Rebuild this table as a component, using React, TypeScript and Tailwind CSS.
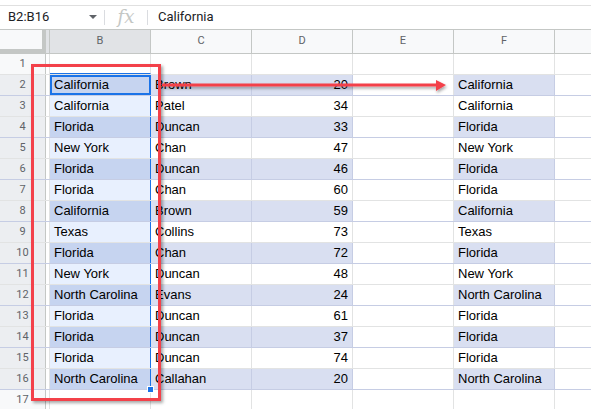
import React from 'react';

type Row = { n: number; b: string; c: string; d: number; f: string };

const rows: Row[] = [
  { n: 2, b: 'California', c: 'Brown', d: 20, f: 'California' },
  { n: 3, b: 'California', c: 'Patel', d: 34, f: 'California' },
  { n: 4, b: 'Florida', c: 'Duncan', d: 33, f: 'Florida' },
  { n: 5, b: 'New York', c: 'Chan', d: 47, f: 'New York' },
  { n: 6, b: 'Florida', c: 'Duncan', d: 46, f: 'Florida' },
  { n: 7, b: 'Florida', c: 'Chan', d: 60, f: 'Florida' },
  { n: 8, b: 'California', c: 'Brown', d: 59, f: 'California' },
  { n: 9, b: 'Texas', c: 'Collins', d: 73, f: 'Texas' },
  { n: 10, b: 'Florida', c: 'Chan', d: 72, f: 'Florida' },
  { n: 11, b: 'New York', c: 'Duncan', d: 48, f: 'New York' },
  { n: 12, b: 'North Carolina', c: 'Evans', d: 24, f: 'North Carolina' },
  { n: 13, b: 'Florida', c: 'Duncan', d: 61, f: 'Florida' },
  { n: 14, b: 'Florida', c: 'Duncan', d: 37, f: 'Florida' },
  { n: 15, b: 'Florida', c: 'Duncan', d: 74, f: 'Florida' },
  { n: 16, b: 'North Carolina', c: 'Callahan', d: 20, f: 'North Carolina' },
];

const cell = 'h-full shrink-0 border-r flex items-center overflow-hidden whitespace-nowrap';

const FormulaBar = () => (
  <div className="h-[25px] pb-px border-t border-t-[#e0e0e0] border-b border-b-[#c4c7c5] mt-[5px] flex items-center font-['Roboto',sans-serif] text-[13px] text-[#202124]">
    <div className="w-[104px] flex items-center justify-between pl-2 pr-[7px]">
      <span>B2:B16</span>
      <svg width="8" height="4" viewBox="0 0 8 4">
        <path d="M0 0h8L4 4z" fill="#5f6368" />
      </svg>
    </div>
    <div className="w-px h-[15px] bg-[#dadce0]" />
    <div className="w-[42px] flex justify-center font-['DejaVu_Serif',serif] italic text-[18px] text-[#c4c7c5] leading-none">
      fx
    </div>
    <div className="w-px h-[15px] bg-[#dadce0]" />
    <span className="pl-[10px]">California</span>
  </div>
);

const Header = () => (
  <div className="h-[24px] flex border-b border-[#c4c7c5] font-['Roboto',sans-serif] text-[11px] text-[#5f6368] bg-[#f8f9fa]">
    <div className="w-[46px] h-full shrink-0 border-r-4 border-b-4 border-[#c4c7c5] -mb-px box-border" />
    <div className="w-[4px] h-full shrink-0 bg-[#e1e3e6] border-r border-[#c4c7c5]" />
    <div className={`${cell} w-[101px] justify-center bg-[#e1e3e6] border-[#c4c7c5]`}>B</div>
    {['C', 'D', 'E', 'F'].map((l) => (
      <div key={l} className={`${cell} w-[101px] justify-center border-[#c4c7c5]`}>
        {l}
      </div>
    ))}
    <div className="flex-1" />
  </div>
);

const RowNum = ({ n, sel }: { n: number; sel?: boolean }) => (
  <div
    className={`w-[46px] h-full shrink-0 border-r border-[#c4c7c5] flex items-center justify-center font-['Roboto',sans-serif] text-[11px] text-[#5f6368] ${sel ? 'bg-[#eceef1]' : 'bg-[#f8f9fa]'}`}
  >
    {n}
  </div>
);

const DataRow = ({ r, last }: { r: Row; last: boolean }) => {
  const band = r.n % 2 === 0;
  const bg = band ? 'bg-[#d9dff1]' : 'bg-white';
  const line = band ? 'border-[#c6cde4]' : 'border-[#e2e3e3]';
  return (
    <div className={`h-[21px] flex border-b ${line} text-[13px] text-black font-['Liberation_Sans',Arial,sans-serif]`}>
      <RowNum n={r.n} sel />
      <div className="w-[4px] h-full shrink-0 border-r border-[#e2e3e3] bg-white" />
      <div
        className={`relative w-[101px] h-full shrink-0 flex items-center pl-[4px] whitespace-nowrap border-r border-[#1a73e8] ${band ? 'bg-[#c6d4f0]' : 'bg-[#e8f0fe]'} ${r.n === 2 ? 'outline-2 outline-[#1a73e8] -outline-offset-2' : ''}`}
      >
        {r.b}
        {last && (
          <div className="absolute -right-[4px] -bottom-[4px] w-[7px] h-[7px] bg-[#1a73e8] border border-white z-10" />
        )}
      </div>
      <div className={`${cell} w-[101px] pl-[4px] ${bg} ${line}`}>{r.c}</div>
      <div className={`${cell} w-[101px] justify-end pr-[4px] ${bg} ${line}`}>{r.d}</div>
      <div className={`${cell} w-[101px] bg-white border-[#e2e3e3]`} />
      <div className={`${cell} w-[101px] pl-[4px] ${bg} ${band ? 'border-[#c6cde4]' : 'border-[#e2e3e3]'}`}>{r.f}</div>
      <div className="flex-1 bg-white" />
    </div>
  );
};

const EmptyRow = ({ n }: { n: number }) => (
  <div className="h-[21px] flex border-b border-[#e2e3e3]">
    <RowNum n={n} />
    <div className="w-[4px] h-full shrink-0 border-r border-[#e2e3e3]" />
    {[0, 1, 2, 3, 4].map((i) => (
      <div key={i} className={`${cell} w-[101px] border-[#e2e3e3] ${n === 1 && i === 0 ? 'border-b border-b-[#1a73e8] -mb-px' : ''}`} />
    ))}
    <div className="flex-1" />
  </div>
);

export default function App() {
  return (
    <div className="relative w-[591px] h-[409px] overflow-hidden bg-white">
      <FormulaBar />
      <Header />
      <EmptyRow n={1} />
      {rows.map((r, i) => (
        <DataRow key={r.n} r={r} last={i === rows.length - 1} />
      ))}
      <EmptyRow n={17} />

      {/* red callout box round B2:B16 */}
      <div className="absolute left-[31px] top-[64px] w-[130px] h-[337px] border-[3px] border-[#f3414a] shadow-[2px_2px_3px_rgba(0,0,0,0.35)] pointer-events-none" />

      {/* arrow to column F */}
      <svg className="absolute left-0 top-0 pointer-events-none" width="591" height="409" viewBox="0 0 591 409">
        <defs>
          <filter id="sh" x="-5%" y="-50%" width="110%" height="300%">
            <feDropShadow dx="1" dy="2" stdDeviation="1.5" floodColor="#000" floodOpacity="0.35" />
          </filter>
        </defs>
        <g filter="url(#sh)">
          <rect x="162" y="83.5" width="276" height="3" fill="#f3414a" />
          <path d="M436 80L446 85L436 91Z" fill="#f3414a" />
        </g>
      </svg>
    </div>
  );
}
